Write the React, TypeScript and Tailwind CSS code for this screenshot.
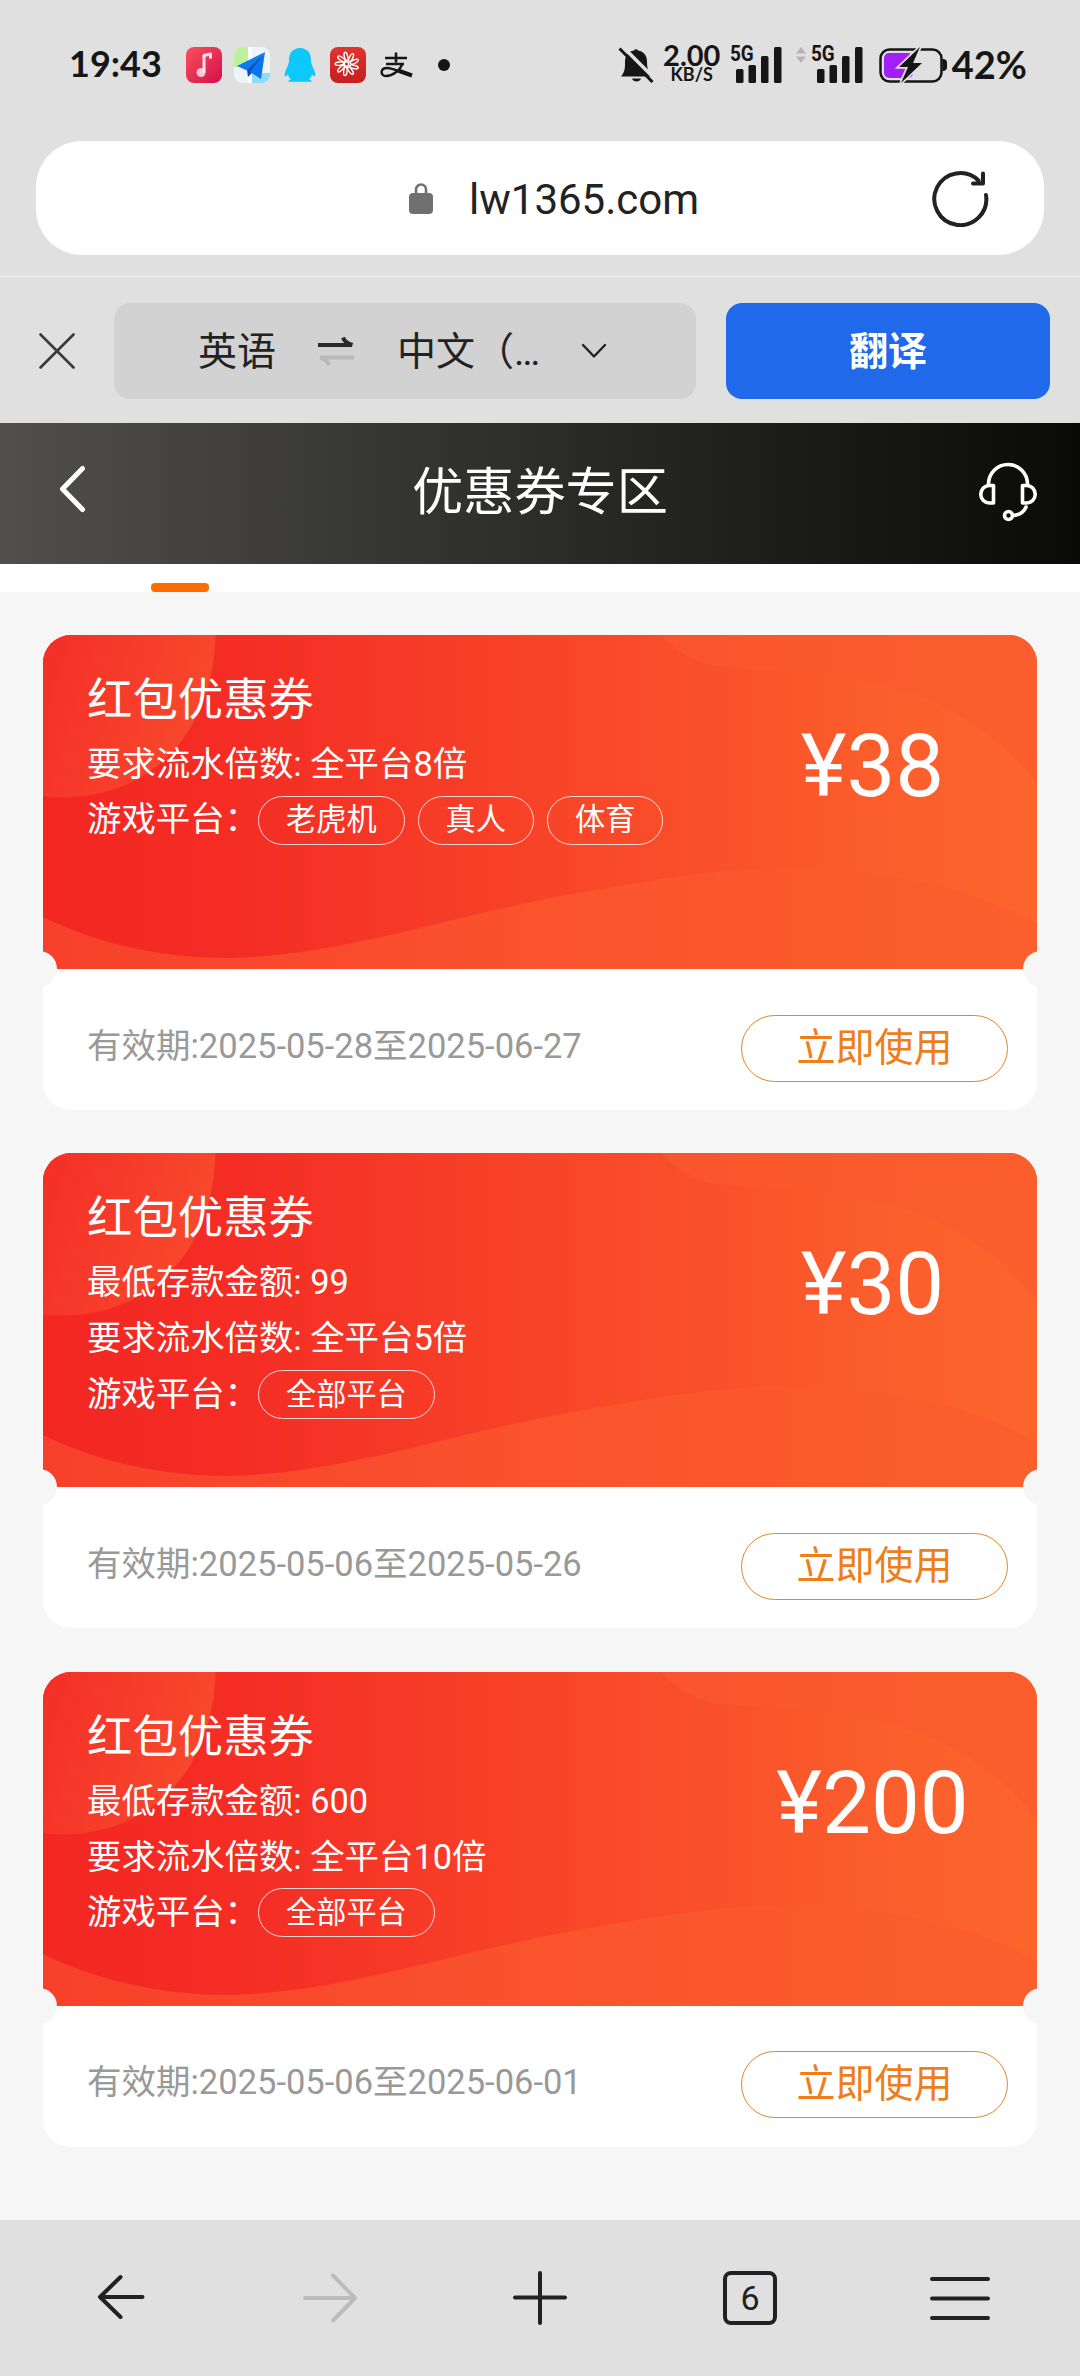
import React from 'react';

interface Coupon {
  id: number;
  title: string;
  rules: string[];
  platforms: string[];
  amount: number;
  from: string;
  to: string;
}

const coupons: Coupon[] = [
  {
    id: 1,
    title: '红包优惠券',
    rules: ['要求流水倍数: 全平台8倍'],
    platforms: ['老虎机', '真人', '体育'],
    amount: 38,
    from: '2025-05-28',
    to: '2025-06-27',
  },
  {
    id: 2,
    title: '红包优惠券',
    rules: ['最低存款金额: 99', '要求流水倍数: 全平台5倍'],
    platforms: ['全部平台'],
    amount: 30,
    from: '2025-05-06',
    to: '2025-05-26',
  },
  {
    id: 3,
    title: '红包优惠券',
    rules: ['最低存款金额: 600', '要求流水倍数: 全平台10倍'],
    platforms: ['全部平台'],
    amount: 200,
    from: '2025-05-06',
    to: '2025-06-01',
  },
];

const MusicIcon = () => (
  <svg width="36" height="36" viewBox="0 0 36 36">
    <defs>
      <linearGradient id="music" x1="0" y1="0" x2="1" y2="1">
        <stop offset="0" stopColor="#fb4f5c" />
        <stop offset="1" stopColor="#d30f4c" />
      </linearGradient>
    </defs>
    <rect width="36" height="36" rx="8" fill="url(#music)" />
    <circle cx="15" cy="25.5" r="4.5" fill="#ffc9cf" />
    <path d="M18 25.5V8.5L24.5 7v4.5" fill="none" stroke="#ffe3e6" strokeWidth="3" strokeLinejoin="round" />
  </svg>
);

const MapIcon = () => (
  <svg width="36" height="36" viewBox="0 0 36 36">
    <defs>
      <clipPath id="mapClip">
        <rect width="36" height="36" rx="8" />
      </clipPath>
    </defs>
    <g clipPath="url(#mapClip)">
      <rect width="36" height="36" fill="#eef4f8" />
      <rect width="14" height="20" fill="#bdf09a" />
      <rect x="14" width="4" height="36" fill="#fff" />
      <rect x="18" y="26" width="18" height="10" fill="#8edcfb" />
      <path d="M31 5L3 19l10 4.500z" fill="#0a7df5" />
      <path d="M31 5L13 23l1 7l4-4z" fill="#0a4fb8" />
      <path d="M31 5L16 25l11 7z" fill="#0b74f0" />
    </g>
  </svg>
);

const PenguinIcon = () => (
  <svg width="36" height="36" viewBox="0 0 36 36">
    <path
      fill="#0cc8fb"
      d="M18 1c7 0 11 5 11 11.500c0 3 .3 4 1.500 7c2 4 3.500 8 2.500 9.500c-.8 1-2-.5-3-1.500c-.5 2-1.500 3.500-3 5c2 .6 3 1.200 2.600 2.300H6.400c-.4-1.100.6-1.700 2.600-2.300c-1.500-1.500-2.500-3-3-5c-1 1-2.200 2.500-3 1.500c-1-1.500.5-5.500 2.500-9.500C6.700 16.500 7 15.500 7 12.500C7 6 11 1 18 1z"
    />
  </svg>
);

const FlowerIcon = () => (
  <svg width="36" height="36" viewBox="0 0 36 36">
    <defs>
      <linearGradient id="flower" x1="0" y1="0" x2="0" y2="1">
        <stop offset="0" stopColor="#e0352f" />
        <stop offset="1" stopColor="#c51f1f" />
      </linearGradient>
    </defs>
    <rect width="36" height="36" rx="8" fill="url(#flower)" />
    <g fill="none" stroke="#fff" strokeWidth="1.400">
      {[0, 40, 80, 120, 160, 200, 240, 280, 320].map(a => (
        <ellipse key={a} cx="18" cy="9.500" rx="1.700" ry="4.300" transform={`rotate(${a + 25} 17 17)`} />
      ))}
      <circle cx="16.500" cy="17" r="2.200" />
    </g>
  </svg>
);

const PayIcon = () => (
  <svg width="36" height="36" viewBox="0 0 36 36" fill="none" stroke="#161616">
    <path d="M7 11h22M18 5.500v10M8 17h18" strokeWidth="2.600" />
    <path d="M24.500 17C22 23 15 29 8 29c-6 0-6-8 1-8c5 0 11 3 15 4.500" strokeWidth="2.400" />
    <path d="M20 23.500l14 5" strokeWidth="4" />
  </svg>
);

const MutedBell = () => (
  <svg width="36" height="36" viewBox="0 0 36 36">
    <path d="M16 3.500a2.200 2.200 0 0 1 4 0c6 1 9 5.500 9 11c0 7 1 10 5 15H3c4-5 4-8 4-15c0-5.500 3-10 9-11z" fill="#161616" />
    <path d="M14 31.500h9c-1 4-8 4-9 0z" fill="#161616" />
    <path d="M3 -2L38 33" stroke="#e0e0e0" strokeWidth="3.500" />
    <path d="M1.500 1.500L34.500 35" stroke="#161616" strokeWidth="3" />
  </svg>
);

const Signal = () => (
  <div className="relative h-10 w-[54px]">
    <span className="absolute -top-[1px] left-0 origin-left scale-x-[0.88] font-[Roboto] text-[21.5px] leading-[19px] font-bold">5G</span>
    <svg width="54" height="40" viewBox="0 0 54 40" fill="#161616">
      <rect x="6" y="24" width="7.500" height="14" rx="1.500" />
      <rect x="18.500" y="20" width="7.500" height="18" rx="1.500" />
      <rect x="31" y="11" width="7.500" height="27" rx="1.500" />
      <rect x="44" y="2" width="7.500" height="36" rx="1.500" />
    </svg>
  </div>
);

const Battery = () => (
  <svg width="68" height="40" viewBox="0 0 68 40">
    <rect x="1.500" y="4.500" width="61" height="32" rx="9" fill="none" stroke="#161616" strokeWidth="2.500" />
    <rect x="5" y="8" width="29" height="25" rx="5" fill="#a020f5" />
    <path d="M63.500 14h1.500q3 1 3 3v6q0 2-3 3h-1.500z" fill="#161616" />
    <path
      d="M41 2L20 22h9L22 38L43 18h-9z"
      fill="#161616"
      stroke="#e0e0e0"
      strokeWidth="3.500"
      paintOrder="stroke"
    />
  </svg>
);

const StatusBar = () => (
  <div className="flex h-[130px] items-center pr-[53px] pl-[69px] text-[#161616]">
    <span className="mb-[5px] w-[117px] font-[Lato] text-[36px] leading-none font-bold">19:43</span>
    <div className="flex items-center gap-3">
      <MusicIcon />
      <MapIcon />
      <PenguinIcon />
      <FlowerIcon />
      <PayIcon />
      <span className="ml-3 size-3 rounded-full bg-[#161616]" />
    </div>
    <div className="ml-auto flex items-center">
      <MutedBell />
      <div className="mb-[5px] ml-[8px] flex w-[60px] flex-col items-center font-[Lato] font-bold">
        <span className="text-[29px] leading-[23px]">2.00</span>
        <span className="text-[18px] leading-[17px]">KB/S</span>
      </div>
      <div className="ml-[8px]">
        <Signal />
      </div>
      <svg className="mt-[-20px] ml-[12px]" width="10" height="16" viewBox="0 0 10 16" fill="#b4b4b4">
        <path d="M5 0l5 6.500H0zM5 16l5-6.500H0z" />
      </svg>
      <div className="ml-[5px]">
        <Signal />
      </div>
      <div className="ml-[14px]">
        <Battery />
      </div>
      <span className="mb-[3px] ml-[5px] font-[Lato] text-[38px] leading-none font-bold">42%</span>
    </div>
  </div>
);

const AddressBar = () => (
  <div className="px-9 pt-[11px]">
    <div className="flex h-[114px] items-center rounded-[46px] bg-white">
      <svg className="ml-[373px]" width="24" height="31" viewBox="0 0 24 31">
        <path d="M7 12V6.500a5 5 0 0 1 10 0V12" fill="none" stroke="#707070" strokeWidth="2.600" />
        <rect y="10" width="24" height="21" rx="4" fill="#707070" />
      </svg>
      <span className="mt-[2px] ml-9 text-[42px] text-[#222]">lw1365.com</span>
      <svg className="mr-[55px] ml-auto" width="58" height="58" viewBox="0 0 58 58" fill="none" stroke="#222" strokeWidth="4" strokeLinecap="round" strokeLinejoin="round">
        <path d="M55 26A26 26 0 1 1 47.500 11.500M52 4.500V14.500H42" />
      </svg>
    </div>
  </div>
);

const TranslateBar = () => (
  <div className="mt-[21px] flex items-center border-t border-[#efefef] pt-[26px] pr-[30px] pb-6 pl-[39px]">
    <svg width="36" height="36" viewBox="0 0 36 36" stroke="#3a3a3a" strokeWidth="2.600" strokeLinecap="round">
      <path d="M1.500 1.500l33 33M34.500 1.500l-33 33" />
    </svg>
    <div className="ml-[39px] flex h-24 w-[582px] items-center rounded-2xl bg-[#d2d2d2] pl-[84px] text-[39px] text-[#222]">
      <span className="pt-[3px]">英语</span>
      <svg className="ml-[42px]" width="36" height="30" viewBox="0 0 36 30" fill="none" strokeWidth="4">
        <path d="M0 9h34" stroke="#2a2a2a" />
        <path d="M25 1.500c1 3 4 6 9.500 7.500" stroke="#2a2a2a" />
        <path d="M2 21.500h34M2 21.500c4 1 7 3 9 7.500" stroke="#b9b9b9" />
      </svg>
      <span className="ml-[43px] pt-[3px]">中文（…</span>
      <svg className="ml-[41px]" width="26" height="16" viewBox="0 0 26 16" fill="none" stroke="#222" strokeWidth="2.400" strokeLinecap="round" strokeLinejoin="round">
        <path d="M2 2l11 11.500L24 2" />
      </svg>
    </div>
    <button className="ml-auto h-24 w-[324px] rounded-2xl bg-[#1f69ea] pt-[3px] text-[39px] font-bold text-white">翻译</button>
  </div>
);

const PageHeader = () => (
  <div className="flex h-[141px] items-center justify-between bg-linear-to-r from-[#504f4d] via-[#2c2c2b] to-[#0a0a09] pr-[42px] pb-1 pl-[57px] text-white">
    <svg className="mb-[6px]" width="60" height="48" viewBox="0 0 60 48" fill="none" stroke="currentColor" strokeWidth="5" strokeLinecap="round" strokeLinejoin="round">
      <path d="M25.500 3.500L5.500 24l20 20.500" />
    </svg>
    <h1 className="mt-[2px] mr-[15px] text-[51.2px] leading-none">优惠券专区</h1>
    <svg width="60" height="60" viewBox="0 0 60 60" fill="none" stroke="currentColor" strokeWidth="3.600" strokeLinecap="round" strokeLinejoin="round">
      <path d="M10.500 22a19.500 19.500 0 0 1 39 0" />
      <path d="M15.500 23.500v17.500h-4a8.750 8.750 0 0 1 0-17.500zM44.500 23.500v17.500h4a8.750 8.750 0 0 0 0-17.500z" />
      <path d="M48 45c-2 5-6 8-13 8.500" />
      <circle cx="30.500" cy="53.500" r="4" />
    </svg>
  </div>
);

const TicketArt = () => (
  <svg className="absolute inset-0" width="994" height="334" viewBox="0 0 994 334">
    <defs>
      <linearGradient id="ticketBase">
        <stop offset="0" stopColor="#f32622" />
        <stop offset="0.200" stopColor="#f42d25" />
        <stop offset="0.600" stopColor="#f94b29" />
        <stop offset="0.850" stopColor="#fb5e2c" />
        <stop offset="1" stopColor="#fc652c" />
      </linearGradient>
      <linearGradient id="ticketCorner" x1="0" y1="0" x2="1" y2="0.300">
        <stop offset="0" stopColor="#f42e27" />
        <stop offset="1" stopColor="#f8492c" />
      </linearGradient>
      <linearGradient id="ticketWave">
        <stop offset="0" stopColor="#f7402a" />
        <stop offset="0.500" stopColor="#fa532d" />
        <stop offset="1" stopColor="#fb5f2c" />
      </linearGradient>
      <linearGradient id="ticketCloud">
        <stop offset="0" stopColor="#fa552d" />
        <stop offset="1" stopColor="#fb5e2d" />
      </linearGradient>
    </defs>
    <rect width="994" height="334" fill="url(#ticketBase)" />
    <path d="M0 0h172.500C170 100 106 162 20 162.500Q8 162.500 0 161z" fill="url(#ticketCorner)" />
    <path d="M618 0C636 18 650 26 668 30C720 38 760 34 838 50C912 66 960 106 994 148V0z" fill="url(#ticketCloud)" />
    <path d="M0 282C50 306 110 323 187 323C310 320 420 275 570 252C650 238 710 232 760 233C860 236 940 258 994 289V334H0z" fill="url(#ticketWave)" />
  </svg>
);

const CouponCard: React.FC<{ coupon: Coupon }> = ({ coupon }) => (
  <div className="relative h-[475px] overflow-hidden rounded-[28px] bg-white">
    <div className="relative flex h-[334px] text-white">
      <TicketArt />
      <div className="relative w-[662px] pt-[41px] pl-[44px]">
        <h2 className="mb-[10px] text-[45.4px] leading-[50px]">{coupon.title}</h2>
        {coupon.rules.map(rule => (
          <p key={rule} className="text-[34.4px] leading-[56px]">{rule}</p>
        ))}
        <div className="flex h-[56px] items-center text-[34.4px]">
          <span className="w-[171px] shrink-0 whitespace-nowrap">游戏平台：</span>
          <div className="flex gap-[13px]">
            {coupon.platforms.map(name => (
              <span key={name} className="flex h-[49px] items-center rounded-full border border-white/80 px-[27px] text-[30.2px]">
                {name}
              </span>
            ))}
          </div>
        </div>
      </div>
      <div className="relative flex-1 pt-[81px] pl-[3px] text-center text-[87px] leading-[100px]">¥{coupon.amount}</div>
    </div>
    <div className="flex h-[141px] items-center justify-between pr-[29px] pl-[44px]">
      <span className="pt-[14px] text-[34.5px] text-[#999]">有效期:{coupon.from}至{coupon.to}</span>
      <button className="mt-[17px] h-[67px] w-[267px] rounded-full border border-[#e0862c] text-[39px] leading-none text-[#ee7d1a]">
        立即使用
      </button>
    </div>
    {/* ticket notches */}
    <span className="absolute top-[316px] -left-[22px] size-9 rounded-full bg-[#f6f6f6]" />
    <span className="absolute top-[316px] -right-[22px] size-9 rounded-full bg-[#f6f6f6]" />
  </div>
);

const BottomNav = () => (
  <div className="grid h-[156px] grid-cols-[243px_174px_246px_174px_243px] items-center justify-items-center bg-[#e0e0e0]">
    <svg width="60" height="60" viewBox="0 0 60 60" fill="none" stroke="#222" strokeWidth="4" strokeLinecap="round" strokeLinejoin="round">
      <path d="M50.500 29H8M28.500 9L8 29l20.500 20" />
    </svg>
    <svg width="60" height="60" viewBox="0 0 60 60" fill="none" stroke="#bcbcbc" strokeWidth="4" strokeLinecap="round" strokeLinejoin="round">
      <path d="M5 30h50M33 7.500L55 30L33 52.500" />
    </svg>
    <svg width="60" height="60" viewBox="0 0 60 60" stroke="#222" strokeWidth="4" strokeLinecap="round">
      <path d="M30 5v50M5 29.500h50" />
    </svg>
    <span className="flex size-[54px] items-center justify-center rounded-lg border-4 border-[#222] text-[34px] text-[#222]">6</span>
    <svg className="ml-[3px]" width="60" height="60" viewBox="0 0 60 60" stroke="#222" strokeWidth="4" strokeLinecap="round">
      <path d="M2 11h56M2 30.500h56M2 50h56" />
    </svg>
  </div>
);

export default function App() {
  return (
    <div className="flex h-[2376px] w-[1080px] flex-col overflow-hidden bg-[#f6f6f6] font-[Roboto,'Noto_Sans_CJK_SC',sans-serif]">
      <div className="bg-[#e0e0e0]">
        <StatusBar />
        <AddressBar />
        <TranslateBar />
      </div>
      <PageHeader />
      <div className="flex h-7 items-end bg-white">
        <span className="ml-[151px] h-[9px] w-[58px] rounded bg-[#fd6d04]" />
      </div>
      <main className="flex flex-1 flex-col gap-[43.4px] px-[43px] pt-[43px]">
        {coupons.map(c => (
          <CouponCard key={c.id} coupon={c} />
        ))}
      </main>
      <BottomNav />
    </div>
  );
}
